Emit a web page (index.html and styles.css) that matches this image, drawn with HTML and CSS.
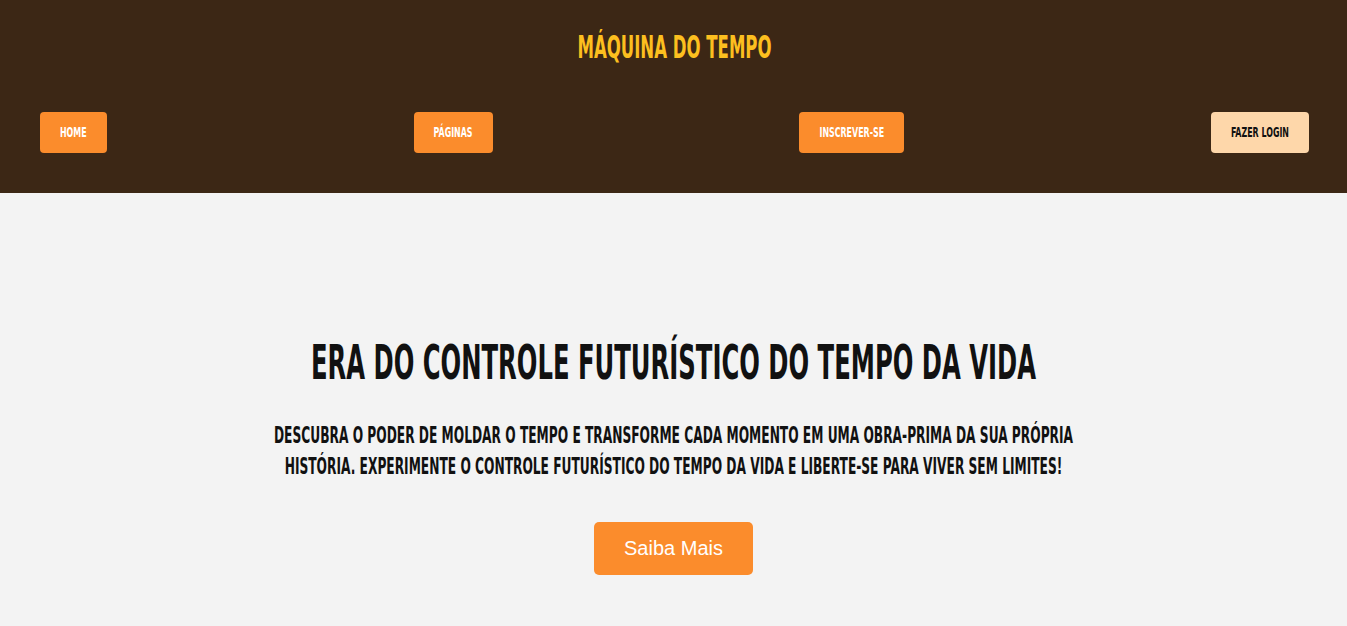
FILE: index.html
```html
<!DOCTYPE html>
<html lang="pt-BR">
<head>
<meta charset="utf-8">
<title>Máquina do Tempo</title>
<link rel="stylesheet" href="styles.css">
</head>
<body>
<header class="site-header">
  <h1 class="brand"><span class="tall">Máquina do Tempo</span></h1>
  <nav class="nav">
    <a class="nav-btn" href="#"><span class="tall">Home</span></a>
    <a class="nav-btn" href="#"><span class="tall">Páginas</span></a>
    <a class="nav-btn" href="#"><span class="tall">Inscrever-se</span></a>
    <a class="nav-btn nav-btn--light" href="#"><span class="tall">Fazer Login</span></a>
  </nav>
</header>
<main class="hero">
  <h2 class="hero-title">Era do Controle Futurístico do Tempo da Vida</h2>
  <p class="hero-text">Descubra o poder de moldar o tempo e transforme cada momento em uma obra-prima da sua própria história. Experimente o controle futurístico do tempo da vida e liberte-se para viver sem limites!</p>
  <a class="cta" href="#">Saiba Mais</a>
</main>
</body>
</html>
```

FILE: styles.css
```css
* { box-sizing: border-box; }

html, body {
  margin: 0;
  padding: 0;
}

body {
  background: #f3f3f3;
  font-family: "DejaVu Sans Condensed", "DejaVu Sans", sans-serif;
  font-stretch: condensed;
}

.tall {
  display: inline-block;
  transform-origin: 50% 50%;
}

.site-header {
  background: #3c2715;
  padding: 20px 38px 40px 40px;
}

.brand {
  margin: 0;
  text-align: center;
  color: #fcbf1f;
  font-size: 18.4px;
  line-height: 56px;
  font-weight: 700;
  text-transform: uppercase;
}

.brand .tall {
  transform: scaleY(1.71);
}

.nav {
  margin-top: 36px;
  display: flex;
  justify-content: space-between;
  align-items: center;
}

.nav-btn {
  display: block;
  background: #fb8c2c;
  color: #ffffff;
  text-decoration: none;
  text-transform: uppercase;
  font-weight: 700;
  font-size: 8.8px;
  line-height: 17px;
  padding: 12px 20px;
  border-radius: 4px;
}

.nav-btn .tall {
  transform: scaleY(1.64);
}

.nav-btn--light {
  background: #fed7aa;
  color: #111111;
}

.hero {
  display: flex;
  flex-direction: column;
  align-items: center;
  text-align: center;
  padding: 150px 20px 150px;
}

.hero-title {
  margin: 0;
  color: #111111;
  font-weight: 700;
  font-size: 27px;
  line-height: 40px;
  text-transform: uppercase;
  transform: scaleY(1.78);
}

.hero-text {
  margin: 50px 0 0;
  max-width: 800px;
  color: #111111;
  font-weight: 700;
  font-size: 13.6px;
  line-height: 17.5px;
  text-transform: uppercase;
  transform: scaleY(1.71);
}

.cta {
  margin-top: 54px;
  display: inline-block;
  background: #fb8c2c;
  color: #ffffff;
  text-decoration: none;
  font-family: "Liberation Sans", Arial, sans-serif;
  font-stretch: normal;
  font-size: 20px;
  line-height: 23px;
  padding: 15px 30px;
  border-radius: 5px;
}
```
